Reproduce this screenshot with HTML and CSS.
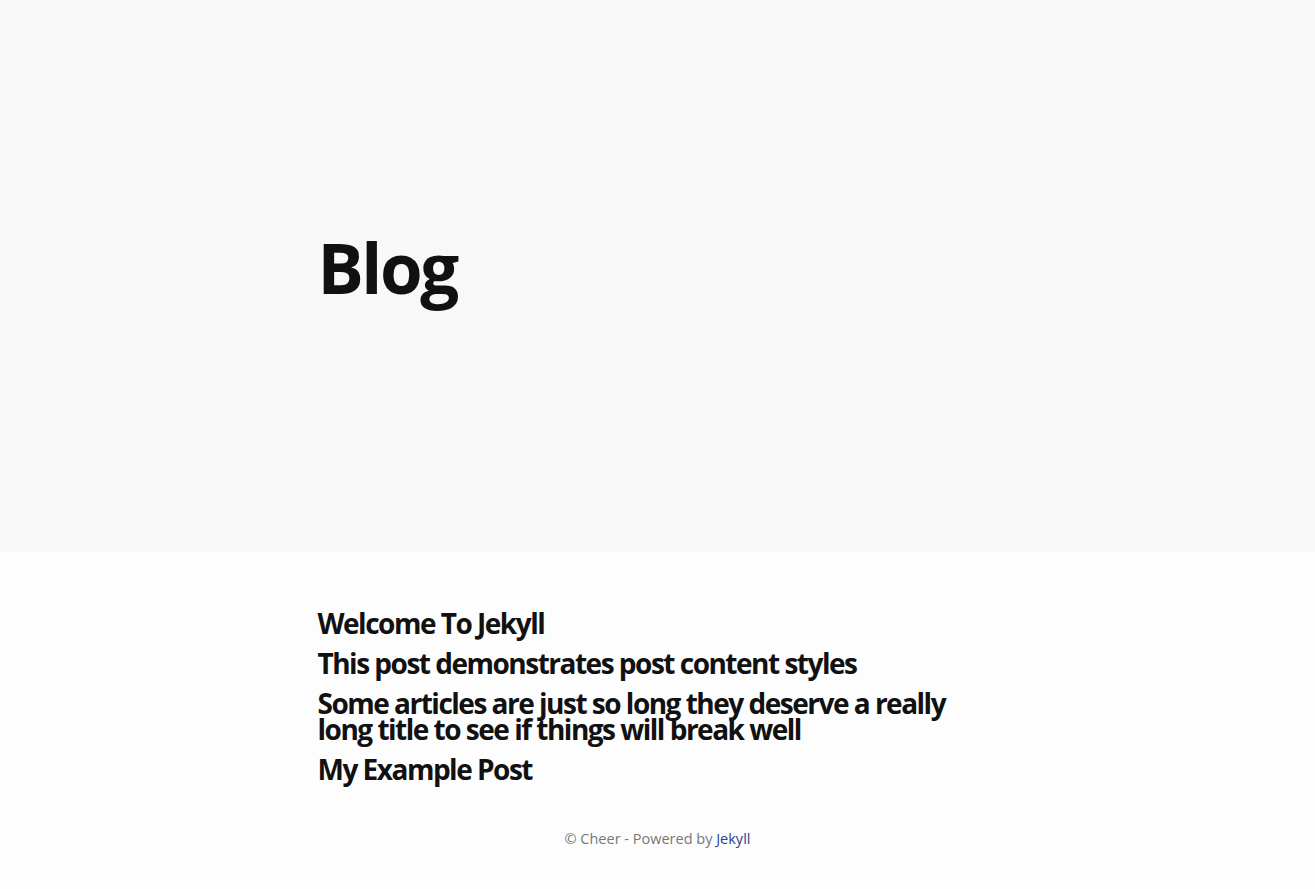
FILE: index.html
```html
<!DOCTYPE html>
<html>
<head>
<meta charset="utf-8">
<link rel="stylesheet" href="styles.css">
</head>
<body>
<header class="hero">
  <div class="container">
    <h1 class="hero-title">Blog</h1>
  </div>
</header>
<main class="posts container">
  <a class="post-title" href="#">Welcome To Jekyll</a>
  <a class="post-title" href="#">This post demonstrates post content styles</a>
  <a class="post-title" href="#">Some articles are just so long they deserve a really long title to see if things will break well</a>
  <a class="post-title" href="#">My Example Post</a>
</main>
<footer class="footer">© Cheer - Powered by <a href="#">Jekyll</a></footer>
</body>
</html>
```
FILE: styles.css
```css
html, body {
  margin: 0;
  padding: 0;
}
body {
  background: #fdfdfd;
  font-family: "Open Sans", sans-serif;
  color: #111;
}
.container {
  width: 680px;
  margin: 0 auto;
}
.hero {
  background: #f8f8f8;
  height: 552px;
  display: flex;
  align-items: center;
}
.hero-title {
  margin: 0;
  font-size: 69px;
  font-weight: 700;
  line-height: 1;
  letter-spacing: -2.5px;
  padding-bottom: 18px;
}
.posts {
  padding-top: 58px;
  display: flex;
  flex-direction: column;
  gap: 14px;
}
.post-title {
  display: block;
  color: #111;
  text-decoration: none;
  font-size: 28px;
  font-weight: 700;
  line-height: 26px;
  letter-spacing: -1.5px;
}
.footer {
  text-align: center;
  font-size: 14.5px;
  color: #777;
  padding: 47px 0 40px;
}
.footer a {
  color: #2a3f8f;
  text-decoration: none;
}
```
